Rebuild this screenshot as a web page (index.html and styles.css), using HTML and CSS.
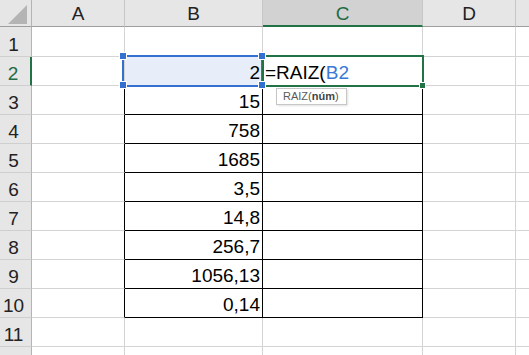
FILE: index.html
```html
<!DOCTYPE html>
<html lang="pt">
<head>
    <meta charset="UTF-8">
    <meta name="viewport" content="width=device-width, initial-scale=1.0">
    <title>RAIZ</title>
    <link rel="stylesheet" href="styles.css">
</head>
<body>
    <div class="folha">
        <div class="grade">
            <div class="cab canto">
                <svg width="31" height="26" viewBox="0 0 31 26"><polygon points="27,5 27,24 8,24" fill="#b4b4b4"/></svg>
            </div>
            <div class="cab">A</div>
            <div class="cab">B</div>
            <div class="cab ativo">C</div>
            <div class="cab">D</div>
            <div class="cab"></div>

            <div class="lin">1</div>
            <div class="cel"></div><div class="cel"></div><div class="cel"></div><div class="cel"></div><div class="cel"></div>

            <div class="lin ativo">2</div>
            <div class="cel"></div>
            <div class="cel num ref embaixo">2</div>
            <div class="cel embaixo formula">=RAIZ(<span class="azul">B2</span></div>
            <div class="cel"></div><div class="cel"></div>

            <div class="lin">3</div>
            <div class="cel borda-dir"></div><div class="cel num caixa">15</div><div class="cel caixa"></div><div class="cel"></div><div class="cel"></div>

            <div class="lin">4</div>
            <div class="cel borda-dir"></div><div class="cel num caixa">758</div><div class="cel caixa"></div><div class="cel"></div><div class="cel"></div>

            <div class="lin">5</div>
            <div class="cel borda-dir"></div><div class="cel num caixa">1685</div><div class="cel caixa"></div><div class="cel"></div><div class="cel"></div>

            <div class="lin">6</div>
            <div class="cel borda-dir"></div><div class="cel num caixa">3,5</div><div class="cel caixa"></div><div class="cel"></div><div class="cel"></div>

            <div class="lin">7</div>
            <div class="cel borda-dir"></div><div class="cel num caixa">14,8</div><div class="cel caixa"></div><div class="cel"></div><div class="cel"></div>

            <div class="lin">8</div>
            <div class="cel borda-dir"></div><div class="cel num caixa">256,7</div><div class="cel caixa"></div><div class="cel"></div><div class="cel"></div>

            <div class="lin">9</div>
            <div class="cel borda-dir"></div><div class="cel num caixa">1056,13</div><div class="cel caixa"></div><div class="cel"></div><div class="cel"></div>

            <div class="lin">10</div>
            <div class="cel borda-dir"></div><div class="cel num caixa">0,14</div><div class="cel caixa"></div><div class="cel"></div><div class="cel"></div>

            <div class="lin">11</div>
            <div class="cel"></div><div class="cel"></div><div class="cel"></div><div class="cel"></div><div class="cel"></div>

            <div class="lin"></div>
            <div class="cel"></div><div class="cel"></div><div class="cel"></div><div class="cel"></div><div class="cel"></div>
        </div>

        <div class="sel-azul"></div>
        <div class="sel-verde"></div>
        <span class="alca azul-a" style="left:120px;top:53px"></span>
        <span class="alca azul-a" style="left:259px;top:53px"></span>
        <span class="alca azul-a" style="left:120px;top:82px"></span>
        <span class="alca azul-a" style="left:259px;top:82px"></span>
        <span class="alca verde-a" style="left:420px;top:83px"></span>

        <div class="dica">RAIZ(<b>núm</b>)</div>
    </div>
</body>
</html>
```

FILE: styles.css
```css
body {
    margin: 0;
    overflow: hidden;
    background-color: #fff;
}

.folha {
    position: relative;
    width: 529px;
    height: 355px;
    overflow: hidden;
}

.grade {
    display: grid;
    grid-template-columns: 32px 93px 138px 160px 93px 80px;
    grid-template-rows: 27px 30px repeat(11, 29px);
    width: 596px;
    font-family: "Liberation Sans", Arial, sans-serif;
    font-size: 19px;
    line-height: 19px;
    color: #000;
}

.grade > div {
    box-sizing: border-box;
    display: flex;
    align-items: flex-end;
    padding: 0 2px 3px 2px;
    border-right: 1px solid #d4d4d4;
    border-bottom: 1px solid #d4d4d4;
    white-space: nowrap;
}

.grade > .cab {
    background-color: #e6e6e6;
    border-right-color: #c6c6c6;
    border-bottom-color: #9e9e9e;
    justify-content: center;
    color: #222;
}

.grade > .cab.ativo {
    background-color: #d2d2d2;
    border-bottom: 2px solid #217346;
    padding-bottom: 2px;
    color: #1f6b45;
}

.grade > .canto {
    padding: 0;
    align-items: flex-start;
    justify-content: flex-start;
    border-right-color: #b4b4b4;
}

.grade > .lin {
    background-color: #e6e6e6;
    border-right-color: #b4b4b4;
    border-bottom-color: #cfcfcf;
    justify-content: center;
    padding-right: 6px;
    padding-bottom: 2px;
    color: #222;
}

.grade > .lin.ativo {
    border-right: 2px solid #217346;
    color: #1f6b45;
}

.num {
    justify-content: flex-end;
}

.ref {
    background-color: #e8eef9;
}

.grade > .embaixo {
    border-bottom-color: #000;
}

.grade > .caixa {
    border-right-color: #000;
    border-bottom-color: #000;
}

.grade > .borda-dir {
    border-right-color: #000;
}

.formula {
    overflow: visible;
}

.azul {
    color: #3a78d6;
}

.sel-azul {
    position: absolute;
    left: 122px;
    top: 55px;
    width: 141px;
    height: 32px;
    box-sizing: border-box;
    border: 2px solid #3470cf;
}

.sel-verde {
    position: absolute;
    left: 262px;
    top: 55px;
    width: 162px;
    height: 32px;
    box-sizing: border-box;
    border: 2px solid #217346;
}

.alca {
    position: absolute;
    width: 6px;
    height: 6px;
    border: 1px solid #fff;
    box-sizing: content-box;
    margin: -1px 0 0 -1px;
}

.azul-a {
    background-color: #3470cf;
}

.verde-a {
    background-color: #217346;
    width: 5px;
    height: 5px;
}

.dica {
    position: absolute;
    left: 276px;
    top: 88px;
    width: 71px;
    height: 17px;
    box-sizing: border-box;
    padding-left: 6px;
    background-color: #fff;
    border: 1px solid #c6c6c6;
    box-shadow: 1px 1px 2px rgba(0, 0, 0, 0.12);
    font-family: "Liberation Sans", Arial, sans-serif;
    font-size: 11px;
    line-height: 15px;
    color: #5a5a5a;
    white-space: nowrap;
}

.dica b {
    color: #444;
}
```
